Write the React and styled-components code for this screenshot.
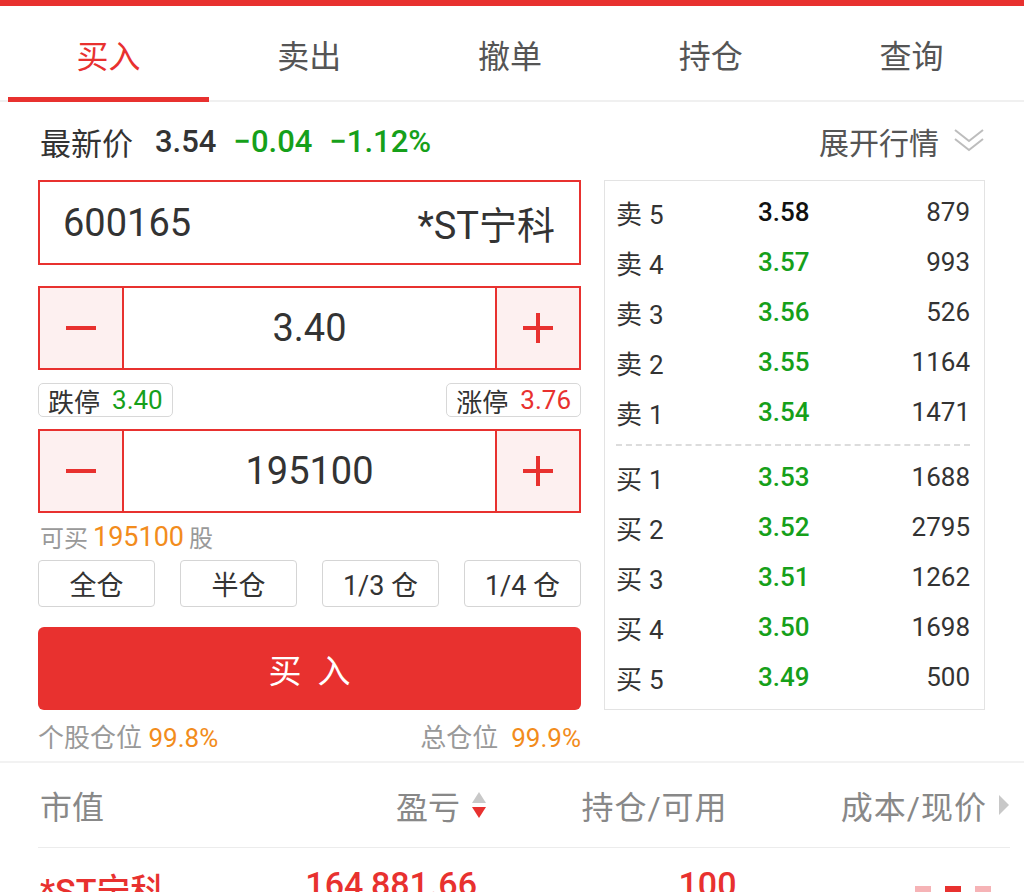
import React from "react";
import styled, { createGlobalStyle } from "styled-components";

const RED = "#e8312f";
const GREEN = "#16a01a";
const ORANGE = "#f28c1c";
const CJK = `"Roboto", "Noto Sans CJK SC", sans-serif`;

const GlobalStyle = createGlobalStyle`
  * {
    box-sizing: border-box;
  }
  body {
    margin: 0;
    background: #fff;
    font-family: ${CJK};
    color: #333;
    overflow: hidden;
  }
`;

const Page = styled.div`
  width: 1024px;
  height: 892px;
  overflow: hidden;
  display: flex;
  flex-direction: column;
  & > * {
    flex-shrink: 0;
  }
`;

const TopBar = styled.div`
  height: 6px;
  background: ${RED};
`;

const Tabs = styled.div`
  display: flex;
  height: 96px;
  padding: 0 12px 0 8px;
  border-bottom: 2px solid #f0f0f0;
`;

const Tab = styled.div`
  flex: 1;
  display: flex;
  align-items: center;
  justify-content: center;
  font-size: 32px;
  color: ${(p) => (p.$active ? RED : "#555")};
  border-bottom: 5px solid ${(p) => (p.$active ? RED : "transparent")};
  margin-bottom: -2px;
  padding-top: 5px;
`;

const Main = styled.div`
  padding: 0 39px 0 38px;
`;

const QuoteRow = styled.div`
  height: 78px;
  display: flex;
  align-items: center;
  justify-content: space-between;
`;

const QuoteLeft = styled.div`
  display: flex;
  align-items: center;
  padding-left: 2px;
`;

const QuoteLabel = styled.span`
  font-size: 31px;
  color: #333;
  margin-right: 22px;
`;

const QuoteNum = styled.span`
  font-size: 31px;
  font-weight: 500;
  color: ${(p) => p.$color || "#333"};
  margin-right: 17px;
`;

const Expand = styled.div`
  display: flex;
  align-items: center;
  gap: 14px;
  font-size: 30px;
  color: #555;
`;

const Body = styled.div`
  display: flex;
  gap: 23px;
  align-items: flex-start;
`;

const Left = styled.div`
  width: 543px;
  display: flex;
  flex-direction: column;
`;

const CodeBox = styled.div`
  height: 85px;
  border: 2px solid ${RED};
  display: flex;
  align-items: center;
  justify-content: space-between;
  padding: 0 24px 0 23px;
  font-size: 38px;
  color: #333;
`;

const Stepper = styled.div`
  height: 84px;
  margin-top: ${(p) => p.$top}px;
  border: 2px solid ${RED};
  display: flex;
`;

const StepBtn = styled.div`
  width: 84px;
  background: #fdf0f0;
  display: flex;
  align-items: center;
  justify-content: center;
  border-${(p) => p.$side}: 2px solid ${RED};
`;

const StepValue = styled.div`
  flex: 1;
  display: flex;
  align-items: center;
  justify-content: center;
  font-size: 38px;
  color: #333;
`;

const LimitRow = styled.div`
  margin-top: 13px;
  display: flex;
  justify-content: space-between;
`;

const LimitTag = styled.div`
  height: 34px;
  border: 1px solid #d8d8d8;
  border-radius: 5px;
  display: flex;
  align-items: center;
  gap: 12px;
  padding: 0 9px;
  font-size: 26px;
  color: #333;
`;

const Colored = styled.span`
  color: ${(p) => p.$color};
  font-size: ${(p) => (p.$size ? p.$size + "px" : "inherit")};
`;

const CanBuy = styled.div`
  height: 47px;
  display: flex;
  align-items: center;
  gap: 5px;
  font-size: 24px;
  color: #999;
  padding-left: 2px;
`;

const PosRow = styled.div`
  display: flex;
  gap: 25px;
`;

const PosBtn = styled.div`
  flex: 1;
  height: 47px;
  border: 1px solid #d5d5d5;
  border-radius: 4px;
  display: flex;
  align-items: center;
  justify-content: center;
  font-size: 27px;
  color: #333;
`;

const BuyButton = styled.div`
  margin-top: 20px;
  height: 83px;
  border-radius: 6px;
  background: ${RED};
  color: #fff;
  font-size: 33px;
  letter-spacing: 16px;
  display: flex;
  align-items: center;
  justify-content: center;
  padding-left: 16px;
`;

const PosInfo = styled.div`
  height: 51px;
  display: flex;
  align-items: center;
  justify-content: space-between;
  font-size: 26px;
  color: #999;
`;

const Book = styled.div`
  width: 381px;
  border: 1px solid #e3e3e3;
  padding: 6px 14px 7px 11px;
`;

const BookRow = styled.div`
  height: 50px;
  display: grid;
  grid-template-columns: 142px 1fr auto;
  align-items: center;
  font-size: 26px;
`;

const BookLabel = styled.span`
  color: #333;
  display: flex;
  align-items: baseline;
  gap: 7px;
`;

const BookPrice = styled.span`
  font-weight: 500;
  color: ${(p) => (p.$flat ? "#111" : GREEN)};
`;

const BookVol = styled.span`
  color: #333;
`;

const Dashed = styled.div`
  border-top: 2px dashed #dcdcdc;
  margin: 7px 0 6px 0;
`;

const Divider = styled.div`
  height: 2px;
  background: #f2f2f2;
`;

const HoldGrid = styled.div`
  display: grid;
  grid-template-columns: 222px 225px 335px 1fr;
  margin: 0 14px 0 38px;
  padding-left: 2px;
`;

const HoldHeader = styled(HoldGrid)`
  height: 85px;
  align-items: center;
  border-bottom: 1px solid #ececec;
  font-size: 32px;
  color: #888;
`;

const HoldRow = styled(HoldGrid)`
  height: 60px;
  align-items: start;
  padding-top: 16px;
  font-size: 34px;
  font-weight: 500;
  color: ${RED};
`;

const Cell = styled.div`
  display: flex;
  align-items: center;
  gap: 11px;
  justify-content: ${(p) => p.$justify || "flex-start"};
  padding-left: ${(p) => p.$shift || 0}px;
  padding-right: ${(p) => p.$end || 0}px;
  letter-spacing: ${(p) => (p.$spaced ? "1px" : "normal")};
`;

const Dots = styled.div`
  display: flex;
  gap: 14px;
  justify-content: flex-end;
  padding-right: 19px;
  margin-top: 22px;
`;

const Dot = styled.span`
  width: 16px;
  height: 10px;
  background: ${(p) => (p.$on ? RED : "#f6b3b6")};
`;

const Minus = () => (
  <svg width="32" height="32" viewBox="0 0 32 32">
    <rect x="1" y="14" width="30" height="4" fill={RED} />
  </svg>
);

const Plus = () => (
  <svg width="32" height="32" viewBox="0 0 32 32">
    <rect x="1" y="14" width="30" height="4" fill={RED} />
    <rect x="14" y="1" width="4" height="30" fill={RED} />
  </svg>
);

const Chevrons = () => (
  <svg width="32" height="28" viewBox="0 0 32 28" fill="none" stroke="#bdbdbd" strokeWidth="2">
    <polyline points="2,3 16,14 30,3" />
    <polyline points="2,12 16,23 30,12" />
  </svg>
);

const SortArrows = () => (
  <svg width="16" height="28" viewBox="0 0 16 28">
    <polygon points="8,1 15,12 1,12" fill="#c8c8c8" />
    <polygon points="1,16 15,16 8,27" fill={RED} />
  </svg>
);

const RightArrow = () => (
  <svg width="12" height="22" viewBox="0 0 12 22">
    <polygon points="1,1 11,11 1,21" fill="#c8c8c8" />
  </svg>
);

const tabs = ["买入", "卖出", "撤单", "持仓", "查询"];
const sells = [
  ["5", "3.58", "879", true],
  ["4", "3.57", "993"],
  ["3", "3.56", "526"],
  ["2", "3.55", "1164"],
  ["1", "3.54", "1471"],
];
const buys = [
  ["1", "3.53", "1688"],
  ["2", "3.52", "2795"],
  ["3", "3.51", "1262"],
  ["4", "3.50", "1698"],
  ["5", "3.49", "500"],
];

const Level = ({ side, n, price, vol, flat }) => (
  <BookRow>
    <BookLabel>
      <span>{side}</span>
      <span>{n}</span>
    </BookLabel>
    <BookPrice $flat={flat}>{price}</BookPrice>
    <BookVol>{vol}</BookVol>
  </BookRow>
);

export default function App() {
  return (
    <Page>
      <GlobalStyle />
      <TopBar />
      <Tabs>
        {tabs.map((t, i) => (
          <Tab key={t} $active={i === 0}>
            {t}
          </Tab>
        ))}
      </Tabs>
      <Main>
        <QuoteRow>
          <QuoteLeft>
            <QuoteLabel>最新价</QuoteLabel>
            <QuoteNum>3.54</QuoteNum>
            <QuoteNum $color={GREEN}>−0.04</QuoteNum>
            <QuoteNum $color={GREEN}>−1.12%</QuoteNum>
          </QuoteLeft>
          <Expand>
            展开行情
            <Chevrons />
          </Expand>
        </QuoteRow>
        <Body>
          <Left>
            <CodeBox>
              <span>600165</span>
              <span>*ST宁科</span>
            </CodeBox>
            <Stepper $top={21}>
              <StepBtn $side="right">
                <Minus />
              </StepBtn>
              <StepValue>3.40</StepValue>
              <StepBtn $side="left">
                <Plus />
              </StepBtn>
            </Stepper>
            <LimitRow>
              <LimitTag>
                跌停 <Colored $color={GREEN}>3.40</Colored>
              </LimitTag>
              <LimitTag>
                涨停 <Colored $color={RED}>3.76</Colored>
              </LimitTag>
            </LimitRow>
            <Stepper $top={12}>
              <StepBtn $side="right">
                <Minus />
              </StepBtn>
              <StepValue>195100</StepValue>
              <StepBtn $side="left">
                <Plus />
              </StepBtn>
            </Stepper>
            <CanBuy>
              可买
              <Colored $color={ORANGE} $size={27}>
                195100
              </Colored>
              股
            </CanBuy>
            <PosRow>
              <PosBtn>全仓</PosBtn>
              <PosBtn>半仓</PosBtn>
              <PosBtn>1/3 仓</PosBtn>
              <PosBtn>1/4 仓</PosBtn>
            </PosRow>
            <BuyButton>买入</BuyButton>
            <PosInfo>
              <span>
                个股仓位 <Colored $color={ORANGE}>99.8%</Colored>
              </span>
              <span>
                总仓位&nbsp;&nbsp;<Colored $color={ORANGE}>99.9%</Colored>
              </span>
            </PosInfo>
          </Left>
          <Book>
            {sells.map(([n, p, v, flat]) => (
              <Level key={"s" + n} side="卖" n={n} price={p} vol={v} flat={flat} />
            ))}
            <Dashed />
            {buys.map(([n, p, v]) => (
              <Level key={"b" + n} side="买" n={n} price={p} vol={v} />
            ))}
          </Book>
        </Body>
      </Main>
      <Divider />
      <HoldHeader>
        <Cell>市值</Cell>
        <Cell $justify="flex-end">
          盈亏
          <SortArrows />
        </Cell>
        <Cell $justify="center" $spaced>
          持仓/可用
        </Cell>
        <Cell $justify="flex-end" $spaced>
          成本/现价
          <RightArrow />
        </Cell>
      </HoldHeader>
      <HoldRow>
        <Cell>*ST宁科</Cell>
        <Cell $justify="flex-end" $end={10}>
          164,881.66
        </Cell>
        <Cell $justify="center" $shift={106}>
          100
        </Cell>
        <Dots>
          <Dot />
          <Dot $on />
          <Dot />
        </Dots>
      </HoldRow>
    </Page>
  );
}
